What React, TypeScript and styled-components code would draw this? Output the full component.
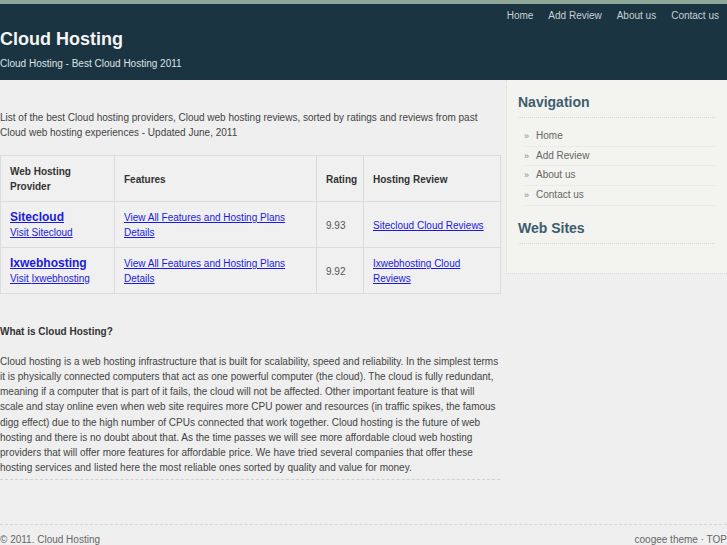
import React from "react";
import styled, { createGlobalStyle } from "styled-components";

const GlobalStyle = createGlobalStyle`
  body {
    margin: 0;
    background: #efefef;
    font-family: "Liberation Sans", Arial, sans-serif;
    font-size: 10px;
    color: #444;
    overflow: hidden;
  }
`;

const TopStrip = styled.div`
  height: 4px;
  background: #8fa899;
`;

const Header = styled.header`
  height: 76px;
  background: #1b3441;
  color: #fff;
  box-sizing: border-box;
  padding-top: 6px;
`;

const TopNav = styled.nav`
  display: flex;
  justify-content: flex-end;
  gap: 15px;
  padding-right: 8px;
  line-height: 12px;

  a {
    color: #c9d0d4;
    text-decoration: none;
    font-size: 10px;
  }
`;

const SiteTitle = styled.h1`
  margin: 6px 0 0;
  font-size: 18px;
  line-height: 22px;
  font-weight: bold;
  color: #f4f4f4;
`;

const Tagline = styled.p`
  margin: 7px 0 0;
  font-size: 10px;
  line-height: 14px;
  color: #dfe3e5;
`;

const Body = styled.div`
  display: flex;
  align-items: flex-start;
`;

const Main = styled.main`
  width: 500px;
  flex-shrink: 0;
  padding-top: 30px;
`;

const Intro = styled.p`
  margin: 0 0 15px;
  line-height: 15px;
  color: #444;
`;

const Table = styled.table`
  width: 500px;
  table-layout: fixed;
  border-collapse: collapse;
  background: #f0f0f0;

  th,
  td {
    border: 1px solid #dcdcdc;
    padding: 8px 9px 7px;
    text-align: left;
    line-height: 15px;
    vertical-align: middle;
  }
  th {
    font-weight: bold;
    color: #333;
  }
  td {
    color: #555;
  }
  a {
    color: #1a1adf;
  }
`;

const ProviderLink = styled.a`
  display: block;
  font-size: 12px;
  font-weight: bold;
`;

const SectionTitle = styled.h3`
  margin: 30px 0 0;
  font-size: 10px;
  line-height: 15px;
  color: #333;
`;

const Article = styled.p`
  margin: 15px 0 0;
  line-height: 15.15px;
  color: #444;
  padding-bottom: 4px;
  border-bottom: 1px dashed #d2d2d2;
`;

const Sidebar = styled.aside`
  flex: 1;
  margin-left: 6px;
  background: #f3f3ef;
  border-left: 1px dotted #d6d9de;
  border-bottom: 1px dotted #d6d9de;
  padding: 13px 12px 29px 11px;
`;

const WidgetTitle = styled.h2<{ $top?: number }>`
  margin: ${(p) => p.$top ?? 0}px 0 0;
  font-size: 14px;
  line-height: 18px;
  color: #3d5d70;
  padding-bottom: 6px;
  border-bottom: 1px dotted #d4d6d8;
`;

const NavList = styled.ul`
  list-style: none;
  margin: 9px 0 0;
  padding: 0 0 0 6px;
`;

const NavItem = styled.li`
  display: flex;
  gap: 7px;
  line-height: 18.7px;
  border-bottom: 1px dotted #e2e3e4;
  color: #666;

  span {
    color: #888;
    font-size: 9px;
  }
`;

const Footer = styled.footer`
  margin-top: 44px;
  border-top: 1px dashed #d6d6d6;
  display: flex;
  justify-content: space-between;
  padding-top: 9px;
  line-height: 12px;
  color: #666;
`;

const navLinks = ["Home", "Add Review", "About us", "Contact us"];

const providers = [
  { name: "Sitecloud", rating: "9.93", review: "Sitecloud Cloud Reviews" },
  { name: "Ixwebhosting", rating: "9.92", review: "Ixwebhosting Cloud Reviews" },
];

export default function App() {
  return (
    <>
      <GlobalStyle />
      <TopStrip />
      <Header>
        <TopNav>
          {navLinks.map((l) => (
            <a key={l} href="#">
              {l}
            </a>
          ))}
        </TopNav>
        <SiteTitle>Cloud Hosting</SiteTitle>
        <Tagline>Cloud Hosting - Best Cloud Hosting 2011</Tagline>
      </Header>
      <Body>
        <Main>
          <Intro>
            List of the best Cloud hosting providers, Cloud web hosting reviews, sorted by ratings
            and reviews from past Cloud web hosting experiences - Updated June, 2011
          </Intro>
          <Table>
            <colgroup>
              <col style={{ width: 114 }} />
              <col style={{ width: 202 }} />
              <col style={{ width: 47 }} />
              <col style={{ width: 137 }} />
            </colgroup>
            <thead>
              <tr>
                <th>
                  Web Hosting
                  <br />
                  Provider
                </th>
                <th>Features</th>
                <th>Rating</th>
                <th>Hosting Review</th>
              </tr>
            </thead>
            <tbody>
              {providers.map((p) => (
                <tr key={p.name}>
                  <td>
                    <ProviderLink href="#">{p.name}</ProviderLink>
                    <a href="#">Visit {p.name}</a>
                  </td>
                  <td>
                    <a href="#">View All Features and Hosting Plans Details</a>
                  </td>
                  <td>{p.rating}</td>
                  <td>
                    <a href="#">{p.review}</a>
                  </td>
                </tr>
              ))}
            </tbody>
          </Table>
          <SectionTitle>What is Cloud Hosting?</SectionTitle>
          <Article>
            Cloud hosting is a web hosting infrastructure that is built for scalability, speed and
            reliability. In the simplest terms it is physically connected computers that act as one
            powerful computer (the cloud). The cloud is fully redundant, meaning if a computer that
            is part of it fails, the cloud will not be affected. Other important feature is that
            will scale and stay online even when web site requires more CPU power and resources (in
            traffic spikes, the famous digg effect) due to the high number of CPUs connected that
            work together. Cloud hosting is the future of web hosting and there is no doubt about
            that. As the time passes we will see more affordable cloud web hosting providers that
            will offer more features for affordable price. We have tried several companies that
            offer these hosting services and listed here the most reliable ones sorted by quality
            and value for money.
          </Article>
        </Main>
        <Sidebar>
          <WidgetTitle>Navigation</WidgetTitle>
          <NavList>
            {navLinks.map((l) => (
              <NavItem key={l}>
                <span>»</span>
                {l}
              </NavItem>
            ))}
          </NavList>
          <WidgetTitle $top={13}>Web Sites</WidgetTitle>
        </Sidebar>
      </Body>
      <Footer>
        <span>© 2011. Cloud Hosting</span>
        <span>coogee theme · TOP</span>
      </Footer>
    </>
  );
}
